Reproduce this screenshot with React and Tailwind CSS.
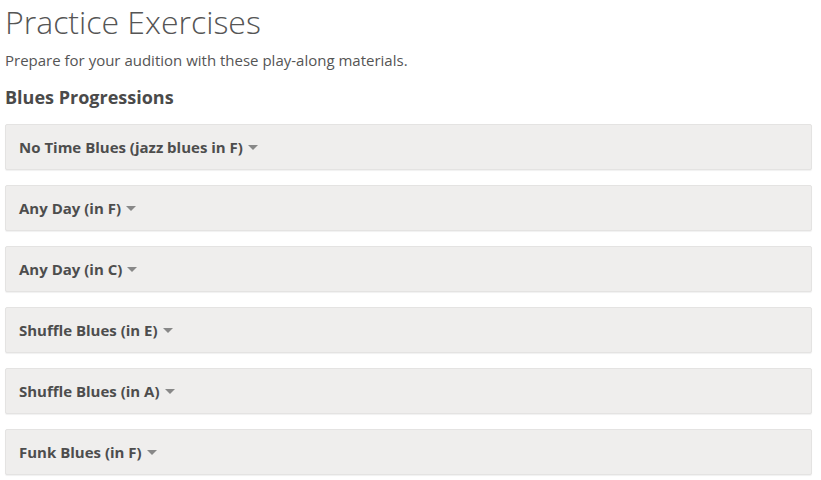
import React from "react";

const items = [
  "No Time Blues (jazz blues in F)",
  "Any Day (in F)",
  "Any Day (in C)",
  "Shuffle Blues (in E)",
  "Shuffle Blues (in A)",
  "Funk Blues (in F)",
];

const Caret = () => (
  <span className="inline-block ml-[5px] align-middle w-0 h-0 border-l-[5px] border-r-[5px] border-t-[5px] border-l-transparent border-r-transparent border-t-[#888]" />
);

export default function App() {
  return (
    <div className="min-h-screen bg-white px-[5px] text-[#555]" style={{ fontFamily: '"Open Sans", sans-serif' }}>
      <h1 className="text-[32px] font-light leading-[44px]">Practice Exercises</h1>
      <p className="text-[15px] mt-[6px] leading-[20px]">Prepare for your audition with these play-along materials.</p>
      <h2 className="text-[18px] font-bold mt-[15px] leading-[24px] text-[#4a4a4a]">Blues Progressions</h2>

      {/* Accordion panels */}
      <div className="mt-[15px] flex flex-col gap-[15px] w-[807px]">
        {items.map((item) => (
          <div
            key={item}
            className="h-[46px] bg-[#efeeed] border border-[#e4e3e2] rounded-[2px] shadow-[0_1px_1px_rgba(0,0,0,0.06)] flex items-center pl-[13px]"
          >
            <span className="text-[15px] font-bold text-[#4d4d4d]">{item}</span>
            <Caret />
          </div>
        ))}
      </div>
    </div>
  );
}
